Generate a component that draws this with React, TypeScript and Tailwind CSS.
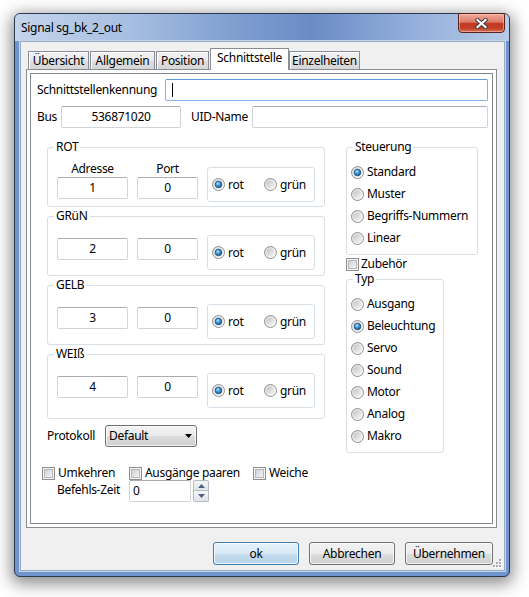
import React from 'react';

const Radio = ({ checked = false }: { checked?: boolean }) => (
  <svg width="13" height="13" viewBox="0 0 13 13" className="shrink-0">
    <circle cx="6.5" cy="6.5" r="6" fill="url(#rOuter)" stroke="#8f9193" />
    <circle cx="6.5" cy="6.5" r="4" fill="url(#rInner)" />
    {checked && <circle cx="6.5" cy="6.5" r="3.3" fill="url(#rDot)" stroke="#1d4f7e" strokeWidth="0.8" />}
  </svg>
);

const Check = () => (
  <svg width="13" height="13" viewBox="0 0 13 13" className="shrink-0">
    <rect x="0.5" y="0.5" width="12" height="12" fill="#f4f4f4" stroke="#8f8f8f" />
    <rect x="2.5" y="2.5" width="8" height="8" fill="url(#cInner)" stroke="#b4b8bd" />
  </svg>
);

const Box = ({ w, children, center = true }: { w: string; children?: React.ReactNode; center?: boolean }) => (
  <div
    className={`${w} h-[22px] border border-[#d0d4d9] border-t-[#abadb3] rounded-[2px] bg-white flex items-center ${
      center ? 'justify-center' : 'justify-start pl-[3px]'
    }`}
  >
    {children}
  </div>
);

const RadioPair = () => (
  <div className="w-[108px] h-[35px] border border-[#d5dfe5] rounded-[3px] bg-white flex items-center pl-[4px]">
    <div className="w-[52px] flex items-center gap-[3px]">
      <Radio checked />
      <span>rot</span>
    </div>
    <div className="flex items-center gap-[3px]">
      <Radio />
      <span>grün</span>
    </div>
  </div>
);

const Group = ({
  title,
  value,
  header = false,
  pb,
}: {
  title: string;
  value: string;
  header?: boolean;
  pb: string;
}) => (
  <fieldset className="w-[278px] border border-[#d5dfe5] rounded-[3px]">
    <legend className="ml-[6px] px-[2px] leading-[16px]">{title}</legend>
    <div className={`flex items-start pl-[9px] ${pb}`}>
      <div className={`flex flex-col items-center ${header ? 'mt-[6px]' : 'mt-[14px]'}`}>
        {header && <span className="h-[16px]">Adresse</span>}
        <Box w="w-[71px]">{value}</Box>
      </div>
      <div className={`flex flex-col items-center ml-[9px] ${header ? 'mt-[6px]' : 'mt-[14px]'}`}>
        {header && <span className="h-[16px]">Port</span>}
        <Box w="w-[61px]">0</Box>
      </div>
      <div className={`ml-[9px] ${header ? 'mt-[12px]' : 'mt-[11px]'}`}>
        <RadioPair />
      </div>
    </div>
  </fieldset>
);

const RadioGroup = ({ title, w, items, sel }: { title: string; w: string; items: string[]; sel: number }) => (
  <fieldset className={`${w} border border-[#d5dfe5] rounded-[3px]`}>
    <legend className="ml-[6px] px-[2px] leading-[16px]">{title}</legend>
    <div className="flex flex-col pl-[4px] mt-[6px] pb-[5px]">
      {items.map((t, i) => (
        <div key={t} className="h-[22px] flex items-center gap-[3px]">
          <Radio checked={i === sel} />
          <span>{t}</span>
        </div>
      ))}
    </div>
  </fieldset>
);

const Button = ({ label, w, primary = false }: { label: string; w: string; primary?: boolean }) => (
  <div
    className={`${w} h-[23px] rounded-[3px] border flex items-center justify-center shadow-[inset_0_0_0_1px_rgba(255,255,255,0.75)] ${
      primary
        ? 'border-[#3c7fb1] bg-[linear-gradient(180deg,#e6f2fa_0%,#d8eaf6_50%,#c6ddee_50%,#b9d4e9_100%)]'
        : 'border-[#707070] bg-[linear-gradient(180deg,#f2f2f2_0%,#ebebeb_50%,#dddddd_50%,#cfcfcf_100%)]'
    }`}
  >
    {label}
  </div>
);

export default function App() {
  return (
    <div className="relative w-[529px] h-[597px] bg-white pt-[13px] pl-[14px] font-['Noto_Sans',sans-serif] text-[12px] leading-[16px] tracking-[-0.3px] text-black overflow-hidden">
      <svg className="absolute w-0 h-0" aria-hidden="true">
        <defs>
          <linearGradient id="rOuter" x1="0" y1="0" x2="1" y2="1">
            <stop offset="0" stopColor="#d9d9d9" />
            <stop offset="1" stopColor="#ffffff" />
          </linearGradient>
          <linearGradient id="rInner" x1="0" y1="0" x2="1" y2="1">
            <stop offset="0" stopColor="#c4c4c4" />
            <stop offset="1" stopColor="#f6f6f6" />
          </linearGradient>
          <radialGradient id="rDot" cx="0.4" cy="0.35" r="0.7">
            <stop offset="0" stopColor="#b8e8ff" />
            <stop offset="0.45" stopColor="#3d9ad6" />
            <stop offset="1" stopColor="#134f88" />
          </radialGradient>
          <linearGradient id="cInner" x1="0" y1="0" x2="1" y2="1">
            <stop offset="0" stopColor="#cbcfd5" />
            <stop offset="1" stopColor="#f7f7f7" />
          </linearGradient>
        </defs>
      </svg>

      <div className="w-[496px] h-[564px] rounded-[6px] border border-[#2b3a52] bg-[#6f94ce] flex flex-col shadow-[0_4px_16px_3px_rgba(0,0,0,0.45)]">
        {/* Title bar */}
        <div className="h-[27px] rounded-t-[5px] bg-[linear-gradient(90deg,#c3d4eb_0%,#a9c0e2_22%,#7e9ed0_45%,#6a8cc5_60%,#92aedb_80%,#b8cbe7_100%)] flex items-start justify-between pl-[6px] pr-[4px]">
          <span className="mt-[6px]">Signal sg_bk_2_out</span>
          <div className="-mt-[1px] w-[47px] h-[20px] rounded-b-[4px] rounded-t-[2px] border border-[#5c2219] bg-[linear-gradient(180deg,#eeaa9a_0%,#dd7c69_45%,#c43a24_52%,#c23d27_78%,#dc7258_100%)] shadow-[inset_0_0_0_1px_rgba(255,210,200,0.5)] flex items-center justify-center">
            <svg width="13" height="11" viewBox="0 0 13 11">
              <path d="M2.5 2 L10.5 9 M10.5 2 L2.5 9" stroke="#3a3a3a" strokeWidth="4" strokeLinecap="square" />
              <path d="M2.5 2 L10.5 9 M10.5 2 L2.5 9" stroke="#ffffff" strokeWidth="2.2" strokeLinecap="square" />
            </svg>
          </div>
        </div>

        {/* Client area */}
        <div className="relative ml-[5px] mr-[4px] mb-[5px] flex-1 border border-[#98a9c2] bg-[#f0f0f0] flex flex-col shadow-[0_0_0_1px_#c9d7ec]">
          {/* Tabs */}
          <div className="flex items-end pl-[7px] pt-[6px]">
            {[
              ['Übersicht', 'w-[61px]', ''],
              ['Allgemein', 'w-[65px]', 'ml-[1px]'],
              ['Position', 'w-[53px]', 'ml-[1px]'],
            ].map(([t, w, m]) => (
              <div
                key={t}
                className={`${w} ${m} h-[18px] border border-b-0 border-[#898c95] bg-[linear-gradient(180deg,#f3f3f3_0%,#e9e9e9_50%,#dedede_51%,#d6d6d6_100%)] shadow-[inset_1px_1px_0_#ffffff] flex items-center justify-center`}
              >
                {t}
              </div>
            ))}
            <div className="w-[79px] ml-[1px] h-[22px] -mb-[1px] relative z-10 border border-b-0 border-[#898c95] bg-white flex items-center justify-center pb-[3px]">
              Schnittstelle
            </div>
            <div className="w-[71px] h-[18px] border border-b-0 border-[#898c95] bg-[linear-gradient(180deg,#f3f3f3_0%,#e9e9e9_50%,#dedede_51%,#d6d6d6_100%)] shadow-[inset_1px_1px_0_#ffffff] flex items-center justify-center">
              Einzelheiten
            </div>
          </div>

          {/* Pane */}
          <div className="relative w-[471px] h-[459px] ml-[5px] border border-[#898c95] bg-white p-[3px]">
            <div className="h-full border border-[#828790] flex flex-col pl-[6px] pt-[5px]">
              {/* Row 1 */}
              <div className="flex items-center h-[22px]">
                <span className="w-[128px]">Schnittstellenkennung</span>
                <div className="w-[323px] h-[22px] border border-[#7eb4ea] border-t-[#5a9ee0] rounded-[2px] bg-white flex items-center pl-[6px]">
                  <span className="w-[1px] h-[14px] bg-black" />
                </div>
              </div>
              {/* Row 2 */}
              <div className="flex items-center h-[22px] mt-[5px]">
                <span className="w-[24px]">Bus</span>
                <Box w="w-[120px]">536871020</Box>
                <span className="ml-[10px] w-[61px]">UID-Name</span>
                <Box w="w-[236px]" />
              </div>

              {/* Lower section */}
              <div className="flex items-start mt-[11px] ml-[10px]">
                <div className="w-[278px] flex flex-col gap-[1px]">
                  <Group title="ROT" value="1" header pb="pb-[4px]" />
                  <Group title="GRüN" value="2" pb="pb-[5px]" />
                  <Group title="GELB" value="3" pb="pb-[5px]" />
                  <Group title="WEIß" value="4" pb="pb-[10px]" />
                  <div className="flex items-center mt-[5px]">
                    <span className="w-[58px]">Protokoll</span>
                    <div className="w-[92px] h-[22px] rounded-[3px] border border-[#707070] bg-[linear-gradient(180deg,#f2f2f2_0%,#ebebeb_50%,#dddddd_50%,#cfcfcf_100%)] shadow-[inset_0_0_0_1px_rgba(255,255,255,0.7)] flex items-center justify-between pl-[3px] pr-[4px]">
                      <span>Default</span>
                      <svg width="7" height="4" viewBox="0 0 7 4">
                        <path d="M0 0 H7 L3.5 4 Z" fill="#000" />
                      </svg>
                    </div>
                  </div>
                </div>

                <div className="ml-[21px] flex flex-col">
                  <RadioGroup
                    title="Steuerung"
                    w="w-[132px]"
                    items={['Standard', 'Muster', 'Begriffs-Nummern', 'Linear']}
                    sel={0}
                  />
                  <div className="flex items-center h-[14px] mt-[2px] gap-[2px]">
                    <Check />
                    <span>Zubehör</span>
                  </div>
                  <RadioGroup
                    title="Typ"
                    w="w-[98px]"
                    items={['Ausgang', 'Beleuchtung', 'Servo', 'Sound', 'Motor', 'Analog', 'Makro']}
                    sel={1}
                  />
                </div>
              </div>

              {/* Checkbox row */}
              <div className="flex items-center h-[14px] mt-[13px] ml-[5px]">
                <div className="w-[87px] flex items-center gap-[3px]">
                  <Check />
                  <span>Umkehren</span>
                </div>
                <div className="w-[124px] flex items-center gap-[3px]">
                  <Check />
                  <span>Ausgänge paaren</span>
                </div>
                <div className="flex items-center gap-[3px]">
                  <Check />
                  <span>Weiche</span>
                </div>
              </div>

              {/* Befehls-Zeit */}
              <div className="flex items-center h-[22px] ml-[20px]">
                <span className="w-[72px] -mt-[3px]">Befehls-Zeit</span>
                <Box w="w-[62px]" center={false}>
                  0
                </Box>
                <div className="ml-[2px] flex flex-col w-[16px] h-[22px]">
                  <div className="h-[11px] border border-[#b4bcc6] rounded-t-[2px] bg-[linear-gradient(180deg,#f5f6f8,#dfe4ea)] flex items-center justify-center">
                    <svg width="7" height="4" viewBox="0 0 7 4">
                      <path d="M0 4 H7 L3.5 0 Z" fill="#4c607f" />
                    </svg>
                  </div>
                  <div className="h-[11px] border border-t-0 border-[#b4bcc6] rounded-b-[2px] bg-[linear-gradient(180deg,#f5f6f8,#dfe4ea)] flex items-center justify-center">
                    <svg width="7" height="4" viewBox="0 0 7 4">
                      <path d="M0 0 H7 L3.5 4 Z" fill="#4c607f" />
                    </svg>
                  </div>
                </div>
              </div>
            </div>
          </div>

          {/* Buttons */}
          <div className="w-[471px] ml-[5px] mt-[14px] pr-[4px] flex justify-end gap-[10px]">
            <Button label="ok" w="w-[86px]" primary />
            <Button label="Abbrechen" w="w-[86px]" />
            <Button label="Übernehmen" w="w-[88px]" />
          </div>

          {/* Size grip */}
          <svg className="absolute right-[2px] bottom-[2px]" width="10" height="10" viewBox="0 0 10 10">
            {[
              [7, 1],
              [4, 4],
              [7, 4],
              [1, 7],
              [4, 7],
              [7, 7],
            ].map(([x, y]) => (
              <g key={`${x}-${y}`}>
                <rect x={x + 1} y={y + 1} width="2" height="2" fill="#ffffff" />
                <rect x={x} y={y} width="2" height="2" fill="#a7a9ac" />
              </g>
            ))}
          </svg>
        </div>
      </div>
    </div>
  );
}
